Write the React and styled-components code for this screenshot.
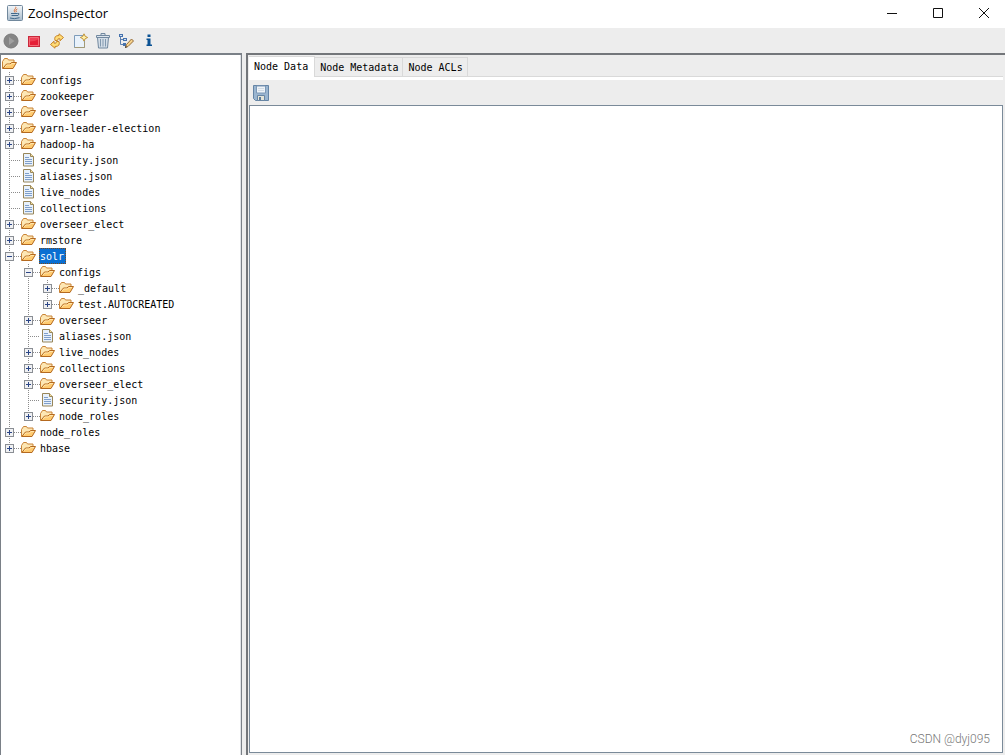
import React, { useState } from "react";
import styled, { createGlobalStyle, css } from "styled-components";

const GlobalStyle = createGlobalStyle`
  * { box-sizing: border-box; }
  html, body { margin: 0; height: 100%; }
  #root { height: 100%; }
  body { background: #ededed; overflow: hidden; }
  ul { list-style: none; margin: 0; padding: 0; }
`;

const mono = '"DejaVu Sans Mono", "Liberation Mono", monospace';

const Window = styled.div`
  position: relative;
  display: flex;
  flex-direction: column;
  height: 100vh;
  background: #ededed;
  color: #000;
`;

const TitleBar = styled.header`
  display: flex;
  align-items: center;
  height: 28px;
  flex: none;
  padding: 0 0 3px 7px;
  background: #fff;
`;

const Title = styled.h1`
  flex: 1;
  margin: 0 0 0 5px;
  font: 400 13px/20px "Open Sans", "Noto Sans", sans-serif;
`;

const BareButton = styled.button`
  display: flex;
  align-items: center;
  justify-content: center;
  padding: 0;
  border: 0;
  background: transparent;
`;

const CaptionButton = styled(BareButton)`
  width: 46px;
  height: 24px;
`;

const CaptionButtons = styled.div`
  display: flex;
  margin-right: -2px;
`;

const ToolBar = styled.div`
  display: flex;
  align-items: center;
  flex: none;
  gap: 7px;
  height: 25px;
  padding: 0 3px;
`;

const ToolButton = styled(BareButton)`
  width: 16px;
  height: 16px;
`;

const Split = styled.main`
  display: grid;
  grid-template-columns: 242px 1fr;
  gap: 4px;
  flex: 1;
  min-height: 0;
`;

const TreePane = styled.nav`
  overflow: hidden;
  padding: 1px 0 0 1px;
  border: solid #7a8087;
  border-width: 2px 1px 0 1px;
  background: #fff;
  box-shadow: inset -1px 0 #dfe2e6;
`;

const dots = css`
  background-image: repeating-linear-gradient(to bottom, #8c8c8c 0 1px, transparent 1px 2px);
  background-repeat: no-repeat;
`;

const Branch = styled.ul`
  && { padding-left: ${(p) => (p.$nested ? 19 : 0)}px; }
`;

const Item = styled.li`
  ${dots}
  background-position: 7px 0;
  background-size: 1px 100%;
  &:last-child { background-size: 1px 8px; }
`;

const Row = styled.div`
  display: flex;
  align-items: center;
  height: 16px;
`;

const Joint = styled.span`
  display: flex;
  align-items: center;
  width: 19px;
  height: 16px;
  padding-left: ${(p) => (p.$leaf ? 7 : 3)}px;
  &::after {
    content: "";
    flex: 1;
    height: 1px;
    background: repeating-linear-gradient(to right, #8c8c8c 0 1px, transparent 1px 2px);
  }
`;

const Toggle = styled(BareButton)`
  width: 9px;
  height: 9px;
  background: #fff;
`;

const Label = styled.span`
  height: 16px;
  margin-left: 2px;
  padding: 0 2px 0 1px;
  font: 10px/18px ${mono};
  white-space: pre;
  ${(p) =>
    p.$selected &&
    css`
      background: #0a6fd2;
      color: #fff;
      outline: 1px dotted #7a4a1c;
      outline-offset: -1px;
    `}
`;

const DetailPane = styled.section`
  display: flex;
  flex-direction: column;
  min-width: 0;
  padding: 1px 2px 2px 1px;
  border: solid #73767a;
  border-width: 2px 0 0 2px;
`;

const Tabs = styled.div`
  display: flex;
  align-items: flex-end;
  flex: none;
  height: 21px;
  border-bottom: 1px solid #d9d9d9;
`;

const Tab = styled.button`
  height: 19px;
  padding: 2px 4px 0 5px;
  border: 1px solid #d9d9d9;
  border-left-width: 0;
  border-bottom: 0;
  background: #ededed;
  font: 10px/16px ${mono};
  color: #000;
  ${(p) =>
    p.$active &&
    css`
      height: 21px;
      margin-bottom: -1px;
      padding: 0 6px 0 5px;
      background: #fff;
    `}
`;

const DataBar = styled.div`
  display: flex;
  align-items: center;
  flex: none;
  height: 28px;
  padding: 0 4px;
  border-top: 3px solid #fff;
`;

const DataText = styled.textarea`
  display: block;
  flex: 1;
  width: 100%;
  min-height: 0;
  padding: 2px;
  resize: none;
  outline: 0;
  border: 1px solid #7a8a99;
  background: #fff;
  font: 10px/16px ${mono};
`;

const Watermark = styled.div`
  position: absolute;
  right: 15px;
  bottom: 8px;
  font: 300 12px/16px Roboto, "Liberation Sans", sans-serif;
  color: #777;
`;

const Svg = ({ s = 16, h = s, children }) => (
  <svg width={s} height={h} viewBox={`0 0 ${s} ${h}`} fill="none" aria-hidden="true">
    {children}
  </svg>
);

const FolderIcon = () => (
  <Svg>
    <path d="M.5 12.500V5.500L2.500 2.500h3l1 1.500h5.500v3" fill="#fde7b4" stroke="#c98336" />
    <path d="M.8 12.500L4.500 8H8l1.500-1.500h5L11 12.500z" fill="#ffcb70" stroke="#b4691f" strokeLinejoin="round" />
    <path d="M3 10.800L5 9h3.500L10 7.500h3" stroke="#ffe6ae" />
  </Svg>
);

const FileIcon = () => (
  <Svg>
    <path d="M2.500 1.500h7l3 3v9.500h-10z" fill="#e8f1fb" stroke="#98865a" />
    <path d="M9.500 1.500v3h3" fill="#f5dfa0" stroke="#98865a" />
    <path d="M4 5.500h4M4 7.500h7M4 9.500h7M4 11.500h7" stroke="#7f9fcb" />
  </Svg>
);

const ToggleIcon = ({ open }) => (
  <Svg s={9}>
    <rect x=".5" y=".5" width="8" height="8" fill="#f0f1f3" stroke="#8a8e94" />
    <path d={open ? "M2 4.500h5" : "M2 4.500h5M4.500 2v5"} stroke="#2b4687" />
  </Svg>
);

const JavaIcon = () => (
  <Svg>
    <defs>
      <linearGradient id="java-tile" x2="0" y2="1">
        <stop stopColor="#f4f7fa" />
        <stop offset="1" stopColor="#a9bccc" />
      </linearGradient>
    </defs>
    <rect x=".5" y=".5" width="15" height="15" rx="1" fill="url(#java-tile)" stroke="#71889c" />
    <path d="M8.700 1.800c1 2-3 2.600-.7 5.700M10.300 4c-2 1-1.500 1.700-.8 3" stroke="#dc6a2c" />
    <path d="M4 8.500h6.500M4.500 10.500h5.500M10.500 8.500h1.300q.7 1.500-1.800 2.300M3 13q4 1.500 9.500-.3" stroke="#41698c" />
  </Svg>
);

const PlayIcon = () => (
  <Svg>
    <circle cx="8" cy="8" r="7" fill="#858585" stroke="#7a7a7a" />
    <path d="M6 4v8l5.500-4z" fill="#a0a0a0" />
  </Svg>
);

const StopIcon = () => (
  <Svg>
    <rect x="2.500" y="3.500" width="11" height="10" fill="#e51e36" stroke="#c9283c" />
    <path d="M3.500 12.500v-8h9v8z" stroke="#f46a76" />
    <path d="M4 8.500q5 0 8-2V5H4z" fill="#ee4155" />
  </Svg>
);

const RefreshIcon = () => (
  <Svg>
    <path
      d="M6 7.500Q4.500 2.500 10 2.500V.8l4.500 3.700L11 7.800V5.800Q8.500 5 8.500 7.500zM10 8.500q1.500 5-4 5v1.700L1.500 11.500 5 8.200v2q2.500.8 2.500-1.700z"
      fill="#ffdc76"
      stroke="#c7852a"
      strokeLinejoin="round"
    />
  </Svg>
);

const NewIcon = () => (
  <Svg>
    <path d="M2.500 2.500h10v12h-10z" fill="#e9f2fb" stroke="#7e9cba" />
    <path d="M12.500 9v5.500h-10" stroke="#a39a77" />
    <path d="M12 .8l1.200 2.500 2.500 1.200-2.500 1.200L12 8.200l-1.200-2.500-2.500-1.200 2.500-1.200z" fill="#fff0a8" stroke="#c2943a" />
  </Svg>
);

const TrashIcon = () => (
  <Svg>
    <path d="M2.500 4.500h11l-1 10.500h-9z" fill="#d3dde7" stroke="#71889f" />
    <path d="M5.500 6v7.500M8 6v7.500M10.500 6v7.500" stroke="#8198ae" />
    <path d="M1.500 2.500h13v2h-13zM6 2V.5h4V2" fill="#dce4ec" stroke="#71889f" />
  </Svg>
);

const EditTreeIcon = () => (
  <Svg>
    <path d="M2.500 3v8.500H6M2.500 6.500H6" stroke="#5d7fae" />
    <path d="M1 1h4v3H1zM5 5h4v3H5zM5 10h3v3H5z" fill="#4672ad" />
    <path d="M2 2h2v1H2zM6 6h2v1H6z" fill="#cfe0f5" />
    <path d="M7.500 14.500l1-3 5-5.500 2 2-5.500 5.500z" fill="#f7d38b" stroke="#936b3b" />
    <path d="M7 15l2-1-1.500-1z" fill="#333" />
  </Svg>
);

const InfoIcon = () => (
  <Svg>
    <path d="M6.500 1.500h3v2.500h-3zM5.500 5.500h4v6H11V13H5.500v-1.500h1V7h-1z" fill="#0b5294" />
  </Svg>
);

const SaveIcon = () => (
  <Svg>
    <path d="M.5.5h15v15h-13l-2-2z" fill="#9ab5d0" stroke="#6484a5" />
    <path d="M3.500 1h9v7h-9z" fill="#eef3f8" stroke="#7c98b6" />
    <path d="M5 3.500h6M5 5.500h6" stroke="#d1dbe5" />
    <path d="M4.500 10.500h7v5h-7z" fill="#e4e4d8" stroke="#6785a3" />
    <path d="M6 12h2v3H6z" fill="#5c7b9b" />
  </Svg>
);

const tools = [
  ["Connect", PlayIcon],
  ["Disconnect", StopIcon],
  ["Refresh", RefreshIcon],
  ["Add node", NewIcon],
  ["Delete node", TrashIcon],
  ["Change node viewers", EditTreeIcon],
  ["About", InfoIcon],
];

const captions = [
  ["Minimize", "M1 6.500h10"],
  ["Maximize", "M1.500 1.500h9v9h-9z"],
  ["Close", "M1 1l10 10M11 1L1 11"],
];

const folder = (name, children) => ({ name, folder: true, children });
const file = (name) => ({ name });

const nodes = [
  folder("configs"),
  folder("zookeeper"),
  folder("overseer"),
  folder("yarn-leader-election"),
  folder("hadoop-ha"),
  file("security.json"),
  file("aliases.json"),
  file("live_nodes"),
  file("collections"),
  folder("overseer_elect"),
  folder("rmstore"),
  folder("solr", [
    folder("configs", [folder("_default"), folder("test.AUTOCREATED")]),
    folder("overseer"),
    file("aliases.json"),
    folder("live_nodes"),
    folder("collections"),
    folder("overseer_elect"),
    file("security.json"),
    folder("node_roles"),
  ]),
  folder("node_roles"),
  folder("hbase"),
];

function TreeNode({ node, path, selected, onSelect }) {
  const [open, setOpen] = useState(Boolean(node.children));
  const id = `${path}/${node.name}`;
  return (
    <Item>
      <Row>
        <Joint $leaf={!node.folder}>
          {node.folder && (
            <Toggle aria-label={`Toggle ${node.name}`} aria-expanded={open} onClick={() => setOpen(!open)}>
              <ToggleIcon open={open} />
            </Toggle>
          )}
        </Joint>
        {node.folder ? <FolderIcon /> : <FileIcon />}
        <Label $selected={selected === id} onClick={() => onSelect(id)}>
          {node.name}
        </Label>
      </Row>
      {open && node.children && (
        <Branch $nested>
          {node.children.map((n) => (
            <TreeNode key={n.name} node={n} path={id} selected={selected} onSelect={onSelect} />
          ))}
        </Branch>
      )}
    </Item>
  );
}

export default function App() {
  const [selected, setSelected] = useState("/solr");
  const [tab, setTab] = useState("Node Data");
  return (
    <Window>
      <GlobalStyle />
      <TitleBar>
        <JavaIcon />
        <Title>ZooInspector</Title>
        <CaptionButtons>
          {captions.map(([name, d]) => (
            <CaptionButton key={name} aria-label={name}>
              <Svg s={12}>
                <path d={d} stroke="#111" />
              </Svg>
            </CaptionButton>
          ))}
        </CaptionButtons>
      </TitleBar>
      <ToolBar>
        {tools.map(([name, Icon]) => (
          <ToolButton key={name} aria-label={name}>
            <Icon />
          </ToolButton>
        ))}
      </ToolBar>
      <Split>
        <TreePane aria-label="Nodes">
          <Row>
            <FolderIcon />
          </Row>
          <Branch>
            {nodes.map((n) => (
              <TreeNode key={n.name} node={n} path="" selected={selected} onSelect={setSelected} />
            ))}
          </Branch>
        </TreePane>
        <DetailPane>
          <Tabs role="tablist">
            {["Node Data", "Node Metadata", "Node ACLs"].map((name) => (
              <Tab key={name} role="tab" aria-selected={tab === name} $active={tab === name} onClick={() => setTab(name)}>
                {name}
              </Tab>
            ))}
          </Tabs>
          <DataBar>
            <ToolButton aria-label="Save">
              <SaveIcon />
            </ToolButton>
          </DataBar>
          <DataText aria-label="Node data" />
        </DetailPane>
      </Split>
      <Watermark>CSDN @dyj095</Watermark>
    </Window>
  );
}
